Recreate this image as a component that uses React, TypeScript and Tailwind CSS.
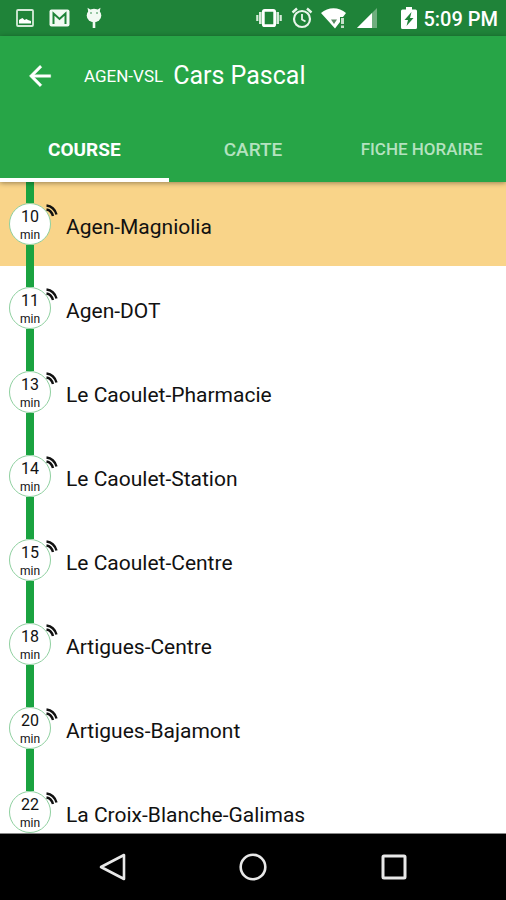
import { useState } from 'react'

const stops = [
  { minutes: 10, name: 'Agen-Magniolia' },
  { minutes: 11, name: 'Agen-DOT' },
  { minutes: 13, name: 'Le Caoulet-Pharmacie' },
  { minutes: 14, name: 'Le Caoulet-Station' },
  { minutes: 15, name: 'Le Caoulet-Centre' },
  { minutes: 18, name: 'Artigues-Centre' },
  { minutes: 20, name: 'Artigues-Bajamont' },
  { minutes: 22, name: 'La Croix-Blanche-Galimas' },
]

const tabs = [
  { label: 'COURSE', size: 'text-[19px]' },
  { label: 'CARTE', size: 'text-[19px]' },
  { label: 'FICHE HORAIRE', size: 'text-[17px]' },
]

function StatusBar() {
  return (
    <div className="flex h-9 shrink-0 items-center justify-between bg-[#1f8339] pl-4 pr-2 text-white">
      <div className="flex items-center gap-[15px]">
        <svg width="18" height="18" viewBox="0 0 18 18" fill="none">
          <rect x="1" y="1" width="16" height="16" rx="1" stroke="#d5ead9" strokeWidth="1.800" />
          <path d="M3 14.500V11l1.500-1 2-1 2 2 2-1 1.500 1 3 1v2.500z" fill="#fff" />
        </svg>
        <svg width="21" height="18" viewBox="0 0 21 18" fill="none">
          <rect x="0.500" y="0.500" width="20" height="17" rx="2" fill="#f2faf3" />
          <path d="M4.500 15V4.500l6 5.500 6-5.500V15" stroke="#1f8339" strokeWidth="2" />
        </svg>
        <svg width="18" height="22" viewBox="0 0 18 22" fill="#f2faf3">
          <ellipse cx="9" cy="8.500" rx="7.300" ry="6.800" />
          <path d="M2.500.8l4 2.400-3 2.500zM15.500.8l-4 2.400 3 2.500zM7.700 14h2.600v7H7.700z" />
          <circle cx="6" cy="6" r="0.800" fill="#1f8339" />
          <circle cx="12" cy="6" r="0.800" fill="#1f8339" />
        </svg>
      </div>
      <div className="flex items-center">
        <svg className="mr-2" width="28" height="22" viewBox="0 0 28 22" fill="none">
          <rect x="8.300" y="3.300" width="11.400" height="15.400" rx="1.500" stroke="#fff" strokeWidth="2.800" />
          <path d="M5.300 5v12M22.700 5v12" stroke="#d5ead9" strokeWidth="2.600" />
          <path d="M2.300 8v6M25.700 8v6" stroke="#d5ead9" strokeWidth="2.200" />
        </svg>
        <svg className="mr-2" width="22" height="22" viewBox="0 0 22 22" fill="none" stroke="#e8f5ea">
          <circle cx="11" cy="12" r="8" strokeWidth="2.200" />
          <path d="M11 7v5.500l3.500 2" strokeWidth="1.800" />
          <path d="M1.500 5.500l4.500-4M20.500 5.500l-4.500-4" strokeWidth="2.400" />
        </svg>
        <svg className="mr-2.5" width="26" height="22" viewBox="0 0 26 22">
          <path d="M0 6C7-.5 18-.5 25 6l-3 4h-3v5l-5 6.500z" fill="#fff" />
          <path d="M10 12.500h6L13 17z" fill="#5a8a63" />
          <path d="M20 11h3v6h-3zM20 18.500h3v2.500h-3z" fill="#c5dfca" />
        </svg>
        <svg className="mr-6" width="20" height="20" viewBox="0 0 20 20">
          <path d="M0 20L20 0v20z" fill="#6fae7e" />
          <path d="M0 20L15 5v15z" fill="#fff" />
        </svg>
        <svg className="mr-1.5" width="16" height="22" viewBox="0 0 16 22">
          <path d="M5 0h6v2.500h3.500a1.500 1.500 0 0 1 1.500 1.500v16.500a1.500 1.500 0 0 1-1.500 1.500h-13A1.500 1.500 0 0 1 0 20.500V4a1.500 1.500 0 0 1 1.500-1.500H5z" fill="#fff" />
          <path d="M10.500 5L3.500 13h3.500L5.500 19l7-8H9z" fill="#1f8339" />
        </svg>
        <span className="pt-0.5 text-[20px] font-medium leading-6">5:09 PM</span>
      </div>
    </div>
  )
}

function Header() {
  const [active, setActive] = useState('COURSE')

  return (
    <header className="relative z-10 shrink-0 bg-[#27a547] text-white shadow-[0_1px_5px_rgba(0,0,0,0.4)]">
      <div className="flex h-20 items-center pl-6">
        <button type="button" aria-label="Retour">
          <svg width="32" height="32" viewBox="0 0 24 24" fill="currentColor" stroke="currentColor" strokeWidth="0.300">
            <path d="M20 11H7.830l5.590-5.590L12 4l-8 8 8 8 1.410-1.410L7.830 13H20v-2z" />
          </svg>
        </button>
        <span className="ml-7 text-[17px] leading-6">AGEN-VSL</span>
        <h1 className="ml-2.5 text-[25px] leading-8">Cars Pascal</h1>
      </div>
      <div role="tablist" className="grid grid-cols-3">
        {tabs.map((tab) => (
          <button
            key={tab.label}
            type="button"
            role="tab"
            aria-selected={active === tab.label}
            onClick={() => setActive(tab.label)}
            className={`h-[66px] border-b-4 pt-1.5 ${tab.size} ${
              active === tab.label ? 'border-white font-bold text-white' : 'border-transparent font-medium text-[#b4e2bf]'
            }`}
          >
            {tab.label}
          </button>
        ))}
      </div>
    </header>
  )
}

function TimeBadge({ minutes }: { minutes: number }) {
  return (
    <div className="relative flex size-[42px] shrink-0 flex-col items-center gap-0.5 rounded-full border border-[#8fd0a0] bg-white pt-[5px]">
      <span className="text-base leading-4">{minutes}</span>
      <span className="text-xs leading-4">min</span>
      <svg className="absolute -right-2 top-0" width="14" height="14" viewBox="0 0 14 14" fill="none" stroke="#111" strokeWidth="2.400">
        <path d="M2.500 1.500c4.500.5 8.500 4 10 9" />
        <path d="M2.500 5.500c3 .5 5.500 3 6.500 6.500" />
      </svg>
    </div>
  )
}

export default function App() {
  return (
    <div className="flex h-screen flex-col bg-white font-['Roboto',sans-serif] text-[#111]">
      <StatusBar />
      <Header />
      <ul className="min-h-0 flex-1 overflow-y-auto [scrollbar-width:none]">
        {stops.map((stop, i) => (
          <li key={stop.name} className={`flex h-21 items-stretch pl-[9px] ${i === 0 ? 'bg-[#f9d489]' : ''}`}>
            <div className="flex flex-col items-center">
              <div className="w-2 flex-1 bg-[#1aa340]" />
              <TimeBadge minutes={stop.minutes} />
              <div className="w-2 flex-1 bg-[#1aa340]" />
            </div>
            <span className="ml-[15px] self-center pt-1.5 text-[21px] leading-7">{stop.name}</span>
          </li>
        ))}
      </ul>
      <nav className="grid h-[67px] shrink-0 grid-cols-[1fr_28px_1fr] items-center border-t border-[#888] bg-black text-[#e8e8e8]">
        <button type="button" aria-label="Précédent" className="mr-28 justify-self-end">
          <svg width="28" height="28" viewBox="0 0 28 28" fill="none" stroke="currentColor" strokeWidth="2.600" strokeLinejoin="round">
            <path d="M25 2v24L2 14z" />
          </svg>
        </button>
        <button type="button" aria-label="Accueil">
          <svg width="28" height="28" viewBox="0 0 28 28" fill="none" stroke="currentColor" strokeWidth="2.600">
            <circle cx="14" cy="14" r="12.300" />
          </svg>
        </button>
        <button type="button" aria-label="Applications récentes" className="ml-28 justify-self-start">
          <svg width="28" height="28" viewBox="0 0 28 28" fill="none" stroke="currentColor" strokeWidth="3">
            <rect x="4" y="3" width="22" height="22" rx="1" />
          </svg>
        </button>
      </nav>
    </div>
  )
}
